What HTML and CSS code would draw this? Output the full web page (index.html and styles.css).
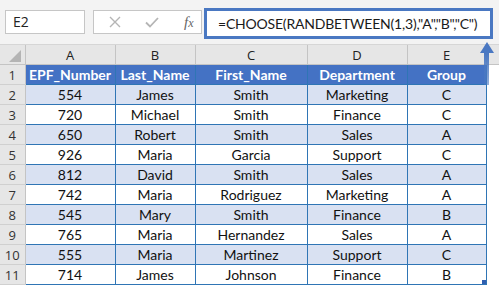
FILE: index.html
```html
<!DOCTYPE html>
<html lang="en">
<head>
    <meta charset="UTF-8">
    <title>CHOOSE RANDBETWEEN</title>
    <link rel="stylesheet" href="styles.css">
</head>
<body>
    <div class="topbar">
        <div class="name-box">E2</div>
        <div class="icon-box">
            <svg class="icon" width="14" height="14" viewBox="0 0 14 14"><path d="M2 2 L12 12 M12 2 L2 12" stroke="#b5b5b5" stroke-width="1.4" fill="none"/></svg>
            <svg class="icon" width="16" height="14" viewBox="0 0 16 14"><path d="M2 7.5 L6 11.5 L14 3" stroke="#b5b5b5" stroke-width="1.8" fill="none"/></svg>
            <span class="fx">f<span class="fx-x">x</span></span>
        </div>
        <div class="formula-box">=CHOOSE(RANDBETWEEN(1,3),"A","B","C")</div>
    </div>

    <table class="sheet">
        <colgroup>
            <col class="c-row">
            <col class="c-a">
            <col class="c-b">
            <col class="c-c">
            <col class="c-d">
            <col class="c-e">
            <col>
        </colgroup>
        <thead>
            <tr class="col-heads">
                <th class="corner"><span class="tri"></span></th>
                <th>A</th>
                <th>B</th>
                <th>C</th>
                <th>D</th>
                <th>E</th>
                <th class="rest"></th>
            </tr>
        </thead>
        <tbody id="rows">
            <tr class="hdr">
                <td class="rn">1</td>
                <td>EPF_Number</td>
                <td>Last_Name</td>
                <td>First_Name</td>
                <td>Department</td>
                <td>Group</td>
                <td class="blank"></td>
            </tr>
        </tbody>
    </table>

    <div class="arrow">
        <div class="arrow-head"></div>
        <div class="arrow-shaft"></div>
    </div>

    <script>
        const data = [
            [554, 'James', 'Smith', 'Marketing', 'C'],
            [720, 'Michael', 'Smith', 'Finance', 'C'],
            [650, 'Robert', 'Smith', 'Sales', 'A'],
            [926, 'Maria', 'Garcia', 'Support', 'C'],
            [812, 'David', 'Smith', 'Sales', 'A'],
            [742, 'Maria', 'Rodriguez', 'Marketing', 'A'],
            [545, 'Mary', 'Smith', 'Finance', 'B'],
            [765, 'Maria', 'Hernandez', 'Sales', 'A'],
            [555, 'Maria', 'Martinez', 'Support', 'C'],
            [714, 'James', 'Johnson', 'Finance', 'B']
        ];

        const body = document.getElementById('rows');
        data.forEach((row, i) => {
            const tr = document.createElement('tr');
            tr.className = i % 2 === 0 ? 'band' : 'plain';
            tr.innerHTML = `<td class="rn">${i + 2}</td>` +
                row.map(v => `<td>${v}</td>`).join('') +
                '<td class="blank"></td>';
            body.appendChild(tr);
        });

        // fill handle on the last cell of the table
        const last = body.lastElementChild.children[5];
        last.classList.add('last');
    </script>
</body>
</html>
```

FILE: styles.css
```css
html, body {
    margin: 0;
    padding: 0;
}
body {
    width: 499px;
    height: 290px;
    overflow: hidden;
    background-color: #ffffff;
    position: relative;
    font-family: Lato, "Open Sans", sans-serif;
}
.topbar {
    height: 45px;
    background-color: #f3f3f3;
    border-bottom: 1px solid #d6d6d6;
    display: flex;
    align-items: flex-start;
    padding-top: 10px;
    box-sizing: border-box;
}
.name-box {
    margin-left: 5px;
    width: 80px;
    height: 24px;
    box-sizing: border-box;
    background-color: #ffffff;
    border: 1px solid #c6c6c6;
    font-family: "Open Sans", sans-serif;
    font-size: 14px;
    line-height: 22px;
    padding-left: 7px;
    color: #222;
}
.icon-box {
    margin-left: 8px;
    width: 109px;
    height: 24px;
    box-sizing: border-box;
    background-color: #ffffff;
    border: 1px solid #c6c6c6;
    display: flex;
    align-items: center;
    padding-left: 14px;
    gap: 22px;
}
.fx {
    font-family: "Liberation Serif", serif;
    font-style: italic;
    font-size: 15px;
    color: #666;
    margin-left: 2px;
}
.fx-x {
    font-size: 12px;
}
.formula-box {
    margin-left: 2px;
    margin-top: -2px;
    width: 289px;
    height: 31px;
    box-sizing: border-box;
    background-color: #ffffff;
    border: 3px solid #4a78c2;
    font-family: Lato, sans-serif;
    font-size: 14px;
    letter-spacing: -0.2px;
    line-height: 25px;
    padding-left: 11px;
    color: #1a1a1a;
    white-space: nowrap;
}
.sheet {
    border-collapse: collapse;
    table-layout: fixed;
    width: 499px;
}
.c-row { width: 25px; }
.c-a { width: 90px; }
.c-b { width: 80px; }
.c-c { width: 112px; }
.c-d { width: 100px; }
.c-e { width: 79px; }
.col-heads th {
    height: 19px;
    padding: 0;
    background-color: #e6e6e6;
    border-right: 1px solid #c4c4c4;
    border-bottom: 1px solid #c4c4c4;
    font-family: "Open Sans", sans-serif;
    font-weight: normal;
    font-size: 13px;
    color: #222;
}
.col-heads th.rest {
    border-right: none;
}
.tri {
    display: block;
    width: 0;
    height: 0;
    margin: 3px 0 0 9px;
    border-left: 12px solid transparent;
    border-bottom: 12px solid #b4b4b4;
}
td {
    height: 19px;
    padding: 0;
    text-align: center;
    font-size: 14px;
    line-height: 18px;
    color: #111;
    border: 1px solid #2f75b5;
    white-space: nowrap;
    overflow: hidden;
}
td.rn {
    background-color: #e6e6e6;
    border: none;
    border-right: 1px solid #c4c4c4;
    border-bottom: 1px solid #d0d0d0;
    font-family: "Open Sans", sans-serif;
    font-size: 13px;
    color: #333;
}
td.blank {
    border: none;
    border-left: 1px solid #2f75b5;
}
.hdr td {
    background-color: #4472c4;
    color: #ffffff;
    font-weight: bold;
}
.hdr td.rn {
    background-color: #e6e6e6;
    color: #333;
    font-weight: normal;
}
.hdr td.blank {
    background-color: #ffffff;
}
.band td {
    background-color: #d9e1f2;
}
.band td.rn {
    background-color: #e6e6e6;
}
.band td.blank,
.plain td.blank {
    background-color: #ffffff;
}
td.last {
    position: relative;
}
td.last::after {
    content: "";
    position: absolute;
    right: 0;
    bottom: 0;
    width: 4px;
    height: 4px;
    background-color: #2f5fb0;
}
.arrow {
    position: absolute;
    left: 480px;
    top: 42px;
    width: 13px;
    display: flex;
    flex-direction: column;
    align-items: center;
}
.arrow-head {
    width: 0;
    height: 0;
    border-left: 7px solid transparent;
    border-right: 7px solid transparent;
    border-bottom: 11px solid #4a78c2;
}
.arrow-shaft {
    width: 5px;
    height: 32px;
    background: linear-gradient(#4a78c2, rgba(74, 120, 194, 0.6));
}
```
